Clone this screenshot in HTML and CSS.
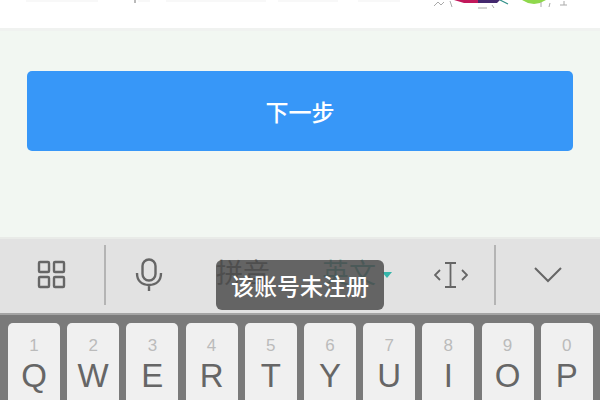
FILE: index.html
```html
<!DOCTYPE html>
<html lang="zh">
<head>
<meta charset="utf-8">
<title>下一步</title>
<link rel="stylesheet" href="styles.css">
</head>
<body>
<div class="screen">
  <header class="top">
    <svg class="faint" width="400" height="6" viewBox="0 0 400 6" fill="none" stroke="#f1f1f1" stroke-width="1">
      <path d="M6 1h72M118 1h12M146 1h100M258 1h60M338 1h42"/>
      <path d="M115 0v3" stroke="#777"/>
    </svg>
    <svg class="captcha" width="142" height="14" viewBox="0 0 142 14">
      <path d="M22 0h26l-2 3H32z" fill="#c2185b"/>
      <path d="M46 0h22l-3 3H46z" fill="#44286e"/>
      <path d="M90 0h24l-6 3-6 1-6-1z" fill="#8fd84c"/>
      <path d="M68 0l8 4" stroke="#2f8f88" stroke-width="1.200" fill="none"/>
      <path d="M2 6l4-4 3 3 3-3M18 1l2 6M46 8h9M60 5l2 3M109 2v5M118 3l-1 4M128 5h7M132 1v4" stroke="#aaa" stroke-width="1" fill="none"/>
    </svg>
  </header>
  <main class="form">
    <button class="next">下一步</button>
  </main>
  <section class="ime">
    <div class="tool tool-grid">
      <svg width="30" height="30" viewBox="0 0 30 30" fill="none" stroke="#666" stroke-width="2.400"><rect x="2" y="2" width="10" height="10" rx="1"/><rect x="17" y="2" width="10" height="10" rx="1"/><rect x="2" y="17" width="10" height="10" rx="1"/><rect x="17" y="17" width="10" height="10" rx="1"/></svg>
    </div>
    <div class="tool tool-mic">
      <svg width="28" height="34" viewBox="0 0 28 34" fill="none" stroke="#666" stroke-width="2.400"><rect x="7.500" y="1.500" width="13" height="21" rx="6.500"/><path d="M2 15c0 8 5 12 12 12s12-4 12-12M14 27v6"/></svg>
    </div>
    <div class="modes"><span class="mode">拼音</span><span class="mode mode-en">英文</span><span class="caret"></span></div>
    <div class="tool tool-cursor">
      <svg width="34" height="28" viewBox="0 0 34 28" fill="none" stroke="#666" stroke-width="1.800"><path d="M6 9l-5 5 5 5M28 9l5 5-5 5M11 2h11M11 26h11M16.500 2v24"/></svg>
    </div>
    <div class="tool tool-hide">
      <svg width="28" height="16" viewBox="0 0 28 16" fill="none" stroke="#666" stroke-width="2"><path d="M1 1l13 13L27 1"/></svg>
    </div>
    <div class="toast">该账号未注册</div>
  </section>
  <section class="keys">
    <div class="key"><small>1</small><b>Q</b></div>
    <div class="key"><small>2</small><b>W</b></div>
    <div class="key"><small>3</small><b>E</b></div>
    <div class="key"><small>4</small><b>R</b></div>
    <div class="key"><small>5</small><b>T</b></div>
    <div class="key"><small>6</small><b>Y</b></div>
    <div class="key"><small>7</small><b>U</b></div>
    <div class="key"><small>8</small><b>I</b></div>
    <div class="key"><small>9</small><b>O</b></div>
    <div class="key"><small>0</small><b>P</b></div>
  </section>
</div>
</body>
</html>
```
FILE: styles.css
```css
* { box-sizing: border-box; }
html, body { margin: 0; padding: 0; }
.screen {
  width: 600px;
  height: 400px;
  overflow: hidden;
  display: flex;
  flex-direction: column;
  background: #f2f7f2;
  font-family: "Liberation Sans", "Noto Sans CJK SC", sans-serif;
}
.top {
  height: 31px;
  flex: none;
  background: #fff;
  border-bottom: 3px solid #f0f2f0;
  display: flex;
  justify-content: space-between;
  align-items: flex-start;
  padding: 0 26px 0 20px;
}
.form {
  height: 206px;
  flex: none;
  padding: 40px 27px 0;
}
.next {
  display: block;
  width: 100%;
  height: 80px;
  border: 0;
  border-radius: 5px;
  background: #3797f8;
  color: #fff;
  font: 500 23px "Noto Sans CJK SC", sans-serif;
}
.ime {
  position: relative;
  height: 78px;
  flex: none;
  background: #e2e2e2;
  border-top: 2px solid #e9ebe8;
  border-bottom: 2px solid #a4a4a4;
  display: flex;
  align-items: center;
  padding-bottom: 2px;
}
.tool { display: flex; align-items: center; justify-content: center; flex: none; height: 60px; }
.tool-grid { width: 106px; border-right: 2px solid #b4b4b4; }
.tool-mic { width: 85px; }
.modes { width: 198px; display: flex; align-items: flex-start; padding: 18px 0 0 25px; gap: 52px; height: 100%; flex: none; }
.mode { font: 27px/30px "Noto Sans CJK SC", sans-serif; width: 54px; color: #333; white-space: nowrap; }
.mode-en { color: #1d8a80; }
.caret { width: 0; height: 0; margin: 15px 0 0 -46px; border: 5px solid transparent; border-top: 6px solid #35b5aa; border-bottom: 0; }
.tool-cursor { width: 107px; border-right: 2px solid #b4b4b4; padding-left: 18px; }
.tool-hide { width: 104px; }
.toast {
  position: absolute;
  left: 216px;
  top: 21px;
  width: 168px;
  height: 50px;
  border-radius: 6px;
  background: rgba(82, 82, 82, 0.88);
  color: #fff;
  font: 500 23px/50px "Noto Sans CJK SC", sans-serif;
  text-align: center;
}
.keys {
  flex: 1;
  background: #7a7a7a;
  padding: 8px 8px 0;
  display: grid;
  grid-template-columns: repeat(10, 52px);
  column-gap: 7.200px;
  align-items: start;
}
.key {
  height: 90px;
  border-radius: 5px;
  background: #f0f0f0;
  display: flex;
  flex-direction: column;
  align-items: center;
  color: #666;
}
.key small { font-size: 17px; line-height: 20px; color: #bbb; margin-top: 13px; }
.key b { font-weight: 400; font-size: 33px; line-height: 36px; margin-top: 2px; }
```
